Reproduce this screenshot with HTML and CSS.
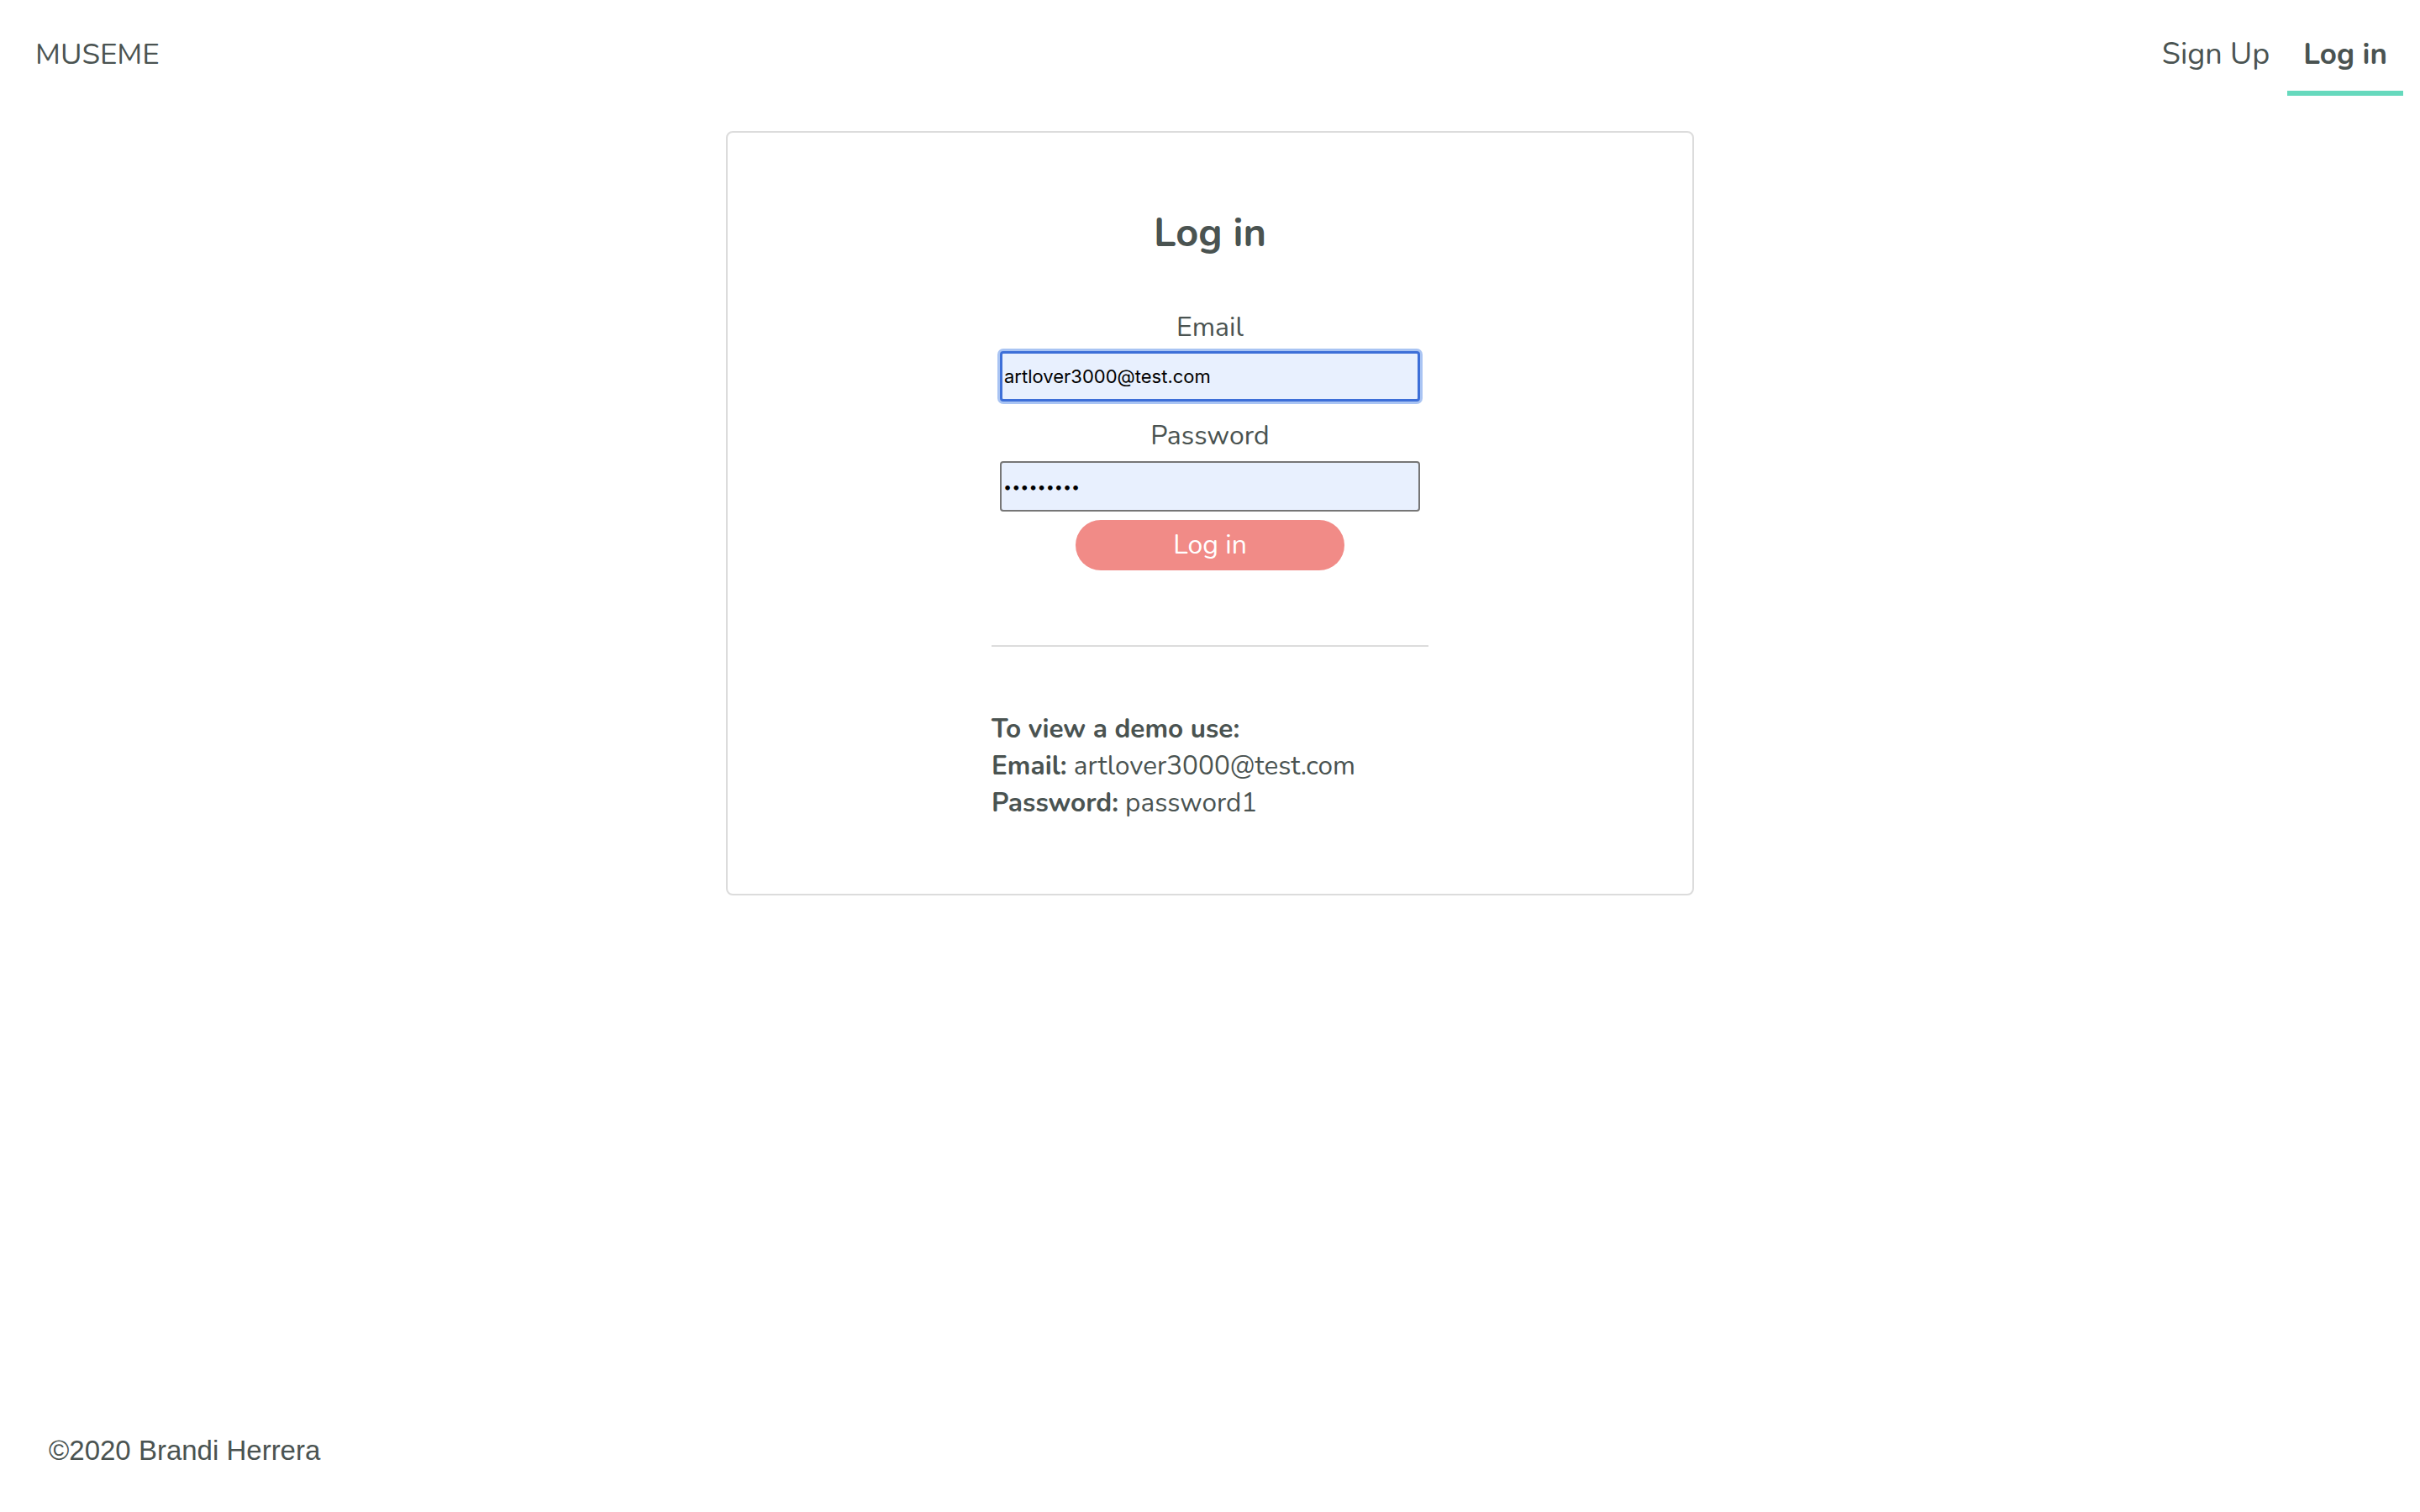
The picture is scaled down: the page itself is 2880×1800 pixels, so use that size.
FILE: index.html
```html
<!DOCTYPE html>
<html lang="en">
<head>
<meta charset="utf-8">
<title>MUSEME - Log in</title>
<link rel="stylesheet" href="styles.css">
</head>
<body>
  <header class="topbar">
    <div class="logo">MUSEME</div>
    <nav class="nav">
      <a class="nav-link" href="#">Sign Up</a>
      <a class="nav-link active" href="#">Log in</a>
    </nav>
  </header>

  <main class="card">
    <h1 class="card-title">Log in</h1>
    <form class="login-form">
      <label class="field-label" for="email">Email</label>
      <input class="field-input focused" id="email" type="email" value="artlover3000@test.com">
      <label class="field-label second" for="password">Password</label>
      <input class="field-input" id="password" type="password" value="password1">
      <button class="submit-btn" type="button">Log in</button>
    </form>
    <hr class="divider">
    <div class="demo">
      <div class="demo-line"><strong>To view a demo use:</strong></div>
      <div class="demo-line"><strong>Email:</strong> artlover3000@test.com</div>
      <div class="demo-line"><strong>Password:</strong> password1</div>
    </div>
  </main>

  <footer class="footer">©2020 Brandi Herrera</footer>
</body>
</html>
```

FILE: styles.css
```css
* { box-sizing: border-box; }

html, body {
  margin: 0;
  padding: 0;
  background: #ffffff;
}

body {
  min-height: 100vh;
  display: flex;
  flex-direction: column;
  font-family: "Nunito", Lato, "Open Sans", sans-serif;
  color: #4a5351;
}

.topbar {
  display: flex;
  justify-content: space-between;
  align-items: flex-start;
  height: 114px;
  padding: 0 20px 0 42px;
}

.logo {
  font-size: 35px;
  line-height: 44px;
  padding-top: 43px;
}

.nav {
  display: flex;
}

.nav-link {
  display: block;
  font-size: 36px;
  line-height: 44px;
  padding: 43px 21px 21px;
  color: #4a5351;
  text-decoration: none;
  border-bottom: 6px solid transparent;
}

.nav-link.active {
  font-weight: 700;
  font-size: 35px;
  padding-left: 19px;
  padding-right: 19px;
  border-bottom-color: #66d9bd;
}

.card {
  width: 1152px;
  height: 910px;
  margin: 42px auto 0;
  border: 2px solid #dcdcdc;
  border-radius: 8px;
  padding-top: 90px;
  display: flex;
  flex-direction: column;
  align-items: center;
}

.card-title {
  margin: 0;
  font-size: 47px;
  line-height: 60px;
  font-weight: 700;
}

.login-form {
  width: 500px;
  margin-top: 60px;
  display: flex;
  flex-direction: column;
  align-items: center;
}

.field-label {
  font-size: 32px;
  line-height: 44px;
  margin-bottom: 6px;
}

.field-label.second {
  margin-top: 19px;
  margin-bottom: 8px;
}

.field-input {
  width: 500px;
  height: 60px;
  margin: 0;
  padding: 0 2px;
  border: 2px solid #767676;
  border-radius: 4px;
  background: #e8f0fe;
  font-family: Inter, "Liberation Sans", sans-serif;
  font-size: 22px;
  color: #000000;
  outline: none;
}

.field-input.focused {
  border: 3px solid #3d6fd8;
  box-shadow: 0 0 0 3px #a9c4f3;
}

.field-input[type="password"] {
  font-size: 18px;
  letter-spacing: 0;
}

.submit-btn {
  margin-top: 10px;
  width: 320px;
  height: 60px;
  border: none;
  border-radius: 30px;
  background: #f18b87;
  color: #ffffff;
  font-family: "Nunito", Lato, "Open Sans", sans-serif;
  font-size: 32px;
  line-height: 44px;
  padding: 0;
  cursor: pointer;
}

.divider {
  width: 520px;
  margin: 89px 0 0;
  border: none;
  border-top: 2px solid #dcdcdc;
  height: 0;
}

.demo {
  width: 520px;
  margin-top: 76px;
  font-size: 31.5px;
  line-height: 44px;
}

.demo strong {
  font-weight: 700;
}

.footer {
  margin-top: auto;
  padding: 0 0 53px 58px;
  font-family: "Liberation Sans", Arial, sans-serif;
  font-size: 33px;
  line-height: 40px;
  color: #4a5351;
}
```
